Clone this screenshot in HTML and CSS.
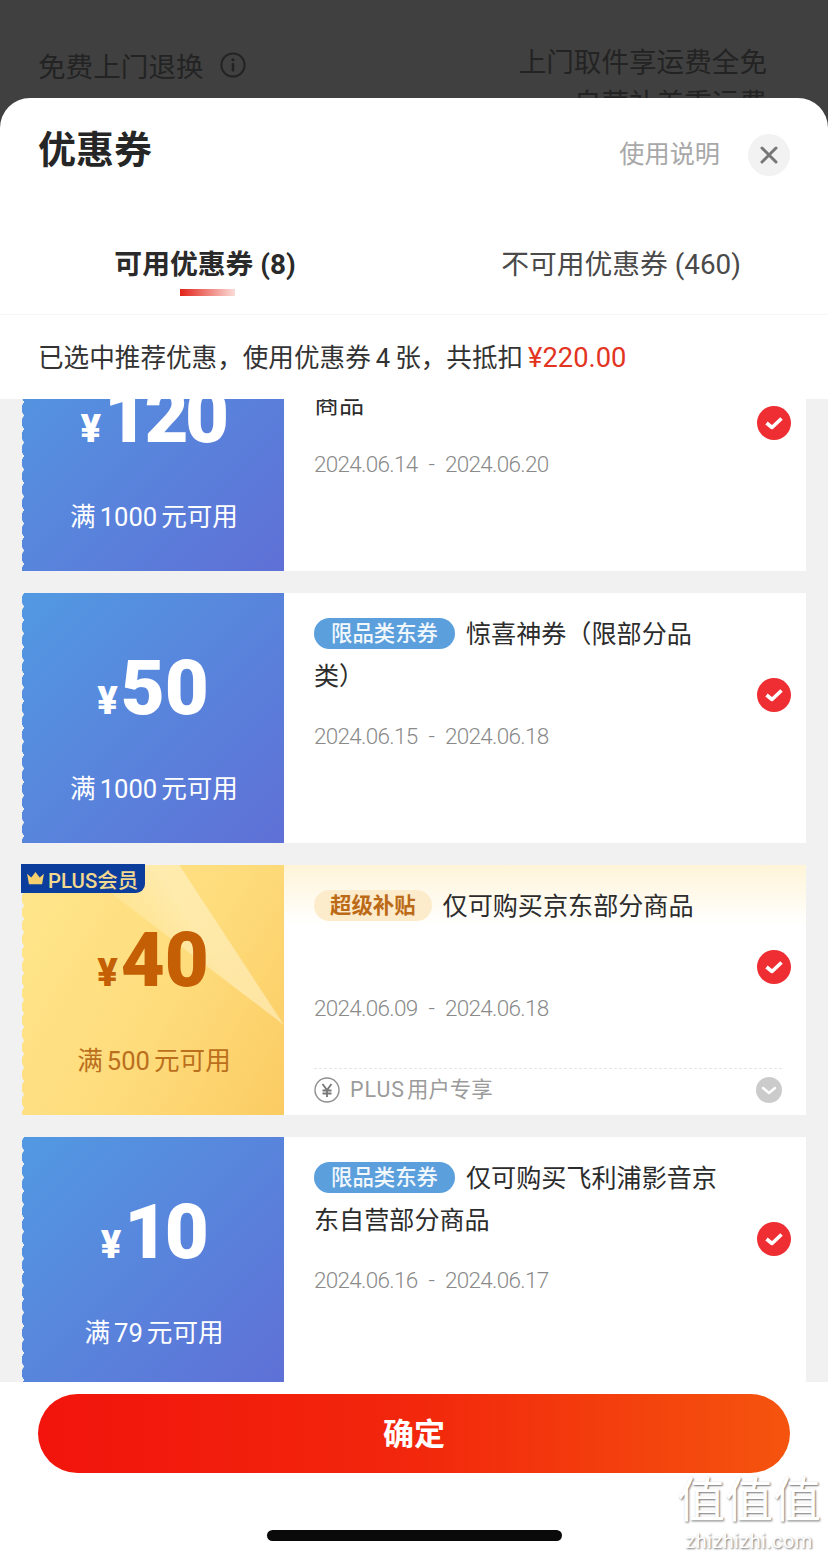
FILE: index.html
```html
<!DOCTYPE html>
<html lang="zh-CN">
<head>
  <meta charset="UTF-8">
  <meta name="viewport" content="width=device-width, initial-scale=1.0">
  <title>优惠券</title>
  <link rel="stylesheet" href="styles.css">
</head>
<body>

<div class="backdrop">
  <div class="backdrop-left">
    <span>免费上门退换</span>
    <svg class="info-icon" viewBox="0 0 26 26" width="26" height="26">
      <circle cx="13" cy="13" r="11.6" fill="none" stroke="#232323" stroke-width="2"/>
      <circle cx="13" cy="7.8" r="1.6" fill="#232323"/>
      <rect x="11.7" y="11" width="2.6" height="8.4" rx="1" fill="#232323"/>
    </svg>
  </div>
  <div class="backdrop-right">上门取件享运费全免<br>自营补差重运费</div>
</div>

<div class="sheet">
  <div class="sheet-head">
    <h1 class="sheet-title">优惠券</h1>
    <div class="sheet-actions">
      <span class="help-link">使用说明</span>
      <span class="close-btn">
        <svg viewBox="0 0 20 20" width="20" height="20">
          <path d="M3 3 L17 17 M17 3 L3 17" stroke="#777" stroke-width="3" stroke-linecap="round"/>
        </svg>
      </span>
    </div>
  </div>

  <div class="tabs">
    <div class="tab active">
      <span>可用优惠券 (8)</span>
      <i class="tab-line"></i>
    </div>
    <div class="tab">
      <span>不可用优惠券 (460)</span>
    </div>
  </div>

  <div class="notice"><span>已选中推荐优惠，使用优惠券</span><span class="num">4</span><span>张，共抵扣</span><span class="price">¥220.00</span></div>

  <div class="coupon-list">
    <div class="coupons">

      <!-- first line of this title is scrolled out of view -->
      <div class="coupon">
        <div class="coupon-left blue">
          <div class="amount"><span class="yen">¥</span><span class="value tight">120</span></div>
          <div class="cond">满<span class="num">1000</span>元可用</div>
        </div>
        <div class="coupon-right">
          <div class="coupon-body">
            <div class="coupon-text">
              <div class="coupon-title"><br>商品</div>
              <div class="coupon-date">2024.06.14 - 2024.06.20</div>
            </div>
            <svg class="check" viewBox="0 0 34 34" width="34" height="34"><circle cx="17" cy="17" r="17" fill="#ee2e32"/><path d="M9.5 17 L15 21.5 L24.5 12.5" fill="none" stroke="#fff" stroke-width="3.6" stroke-linejoin="round"/></svg>
          </div>
        </div>
      </div>

      <div class="coupon">
        <div class="coupon-left blue">
          <div class="amount"><span class="yen">¥</span><span class="value">50</span></div>
          <div class="cond">满<span class="num">1000</span>元可用</div>
        </div>
        <div class="coupon-right">
          <div class="coupon-body">
            <div class="coupon-text">
              <div class="coupon-title"><span class="badge badge-blue">限品类东券</span>惊喜神券（限部分品<br>类）</div>
              <div class="coupon-date">2024.06.15 - 2024.06.18</div>
            </div>
            <svg class="check" viewBox="0 0 34 34" width="34" height="34"><circle cx="17" cy="17" r="17" fill="#ee2e32"/><path d="M9.5 17 L15 21.5 L24.5 12.5" fill="none" stroke="#fff" stroke-width="3.6" stroke-linejoin="round"/></svg>
          </div>
        </div>
      </div>

      <div class="coupon">
        <div class="coupon-left gold">
          <div class="plus-tag">
            <svg viewBox="0 0 20 16" width="19" height="15"><path d="M1 3 L5.5 7 L10 1 L14.5 7 L19 3 L17 14 H3 Z" fill="#f6cf6e"/></svg>
            <span>PLUS会员</span>
          </div>
          <div class="amount"><span class="yen">¥</span><span class="value">40</span></div>
          <div class="cond">满<span class="num">500</span>元可用</div>
        </div>
        <div class="coupon-right gold-top">
          <div class="coupon-body">
            <div class="coupon-text">
              <div class="coupon-title"><span class="badge badge-gold">超级补贴</span>仅可购买京东部分商品</div>
              <div class="coupon-date">2024.06.09 - 2024.06.18</div>
            </div>
            <svg class="check" viewBox="0 0 34 34" width="34" height="34"><circle cx="17" cy="17" r="17" fill="#ee2e32"/><path d="M9.5 17 L15 21.5 L24.5 12.5" fill="none" stroke="#fff" stroke-width="3.6" stroke-linejoin="round"/></svg>
          </div>
          <div class="coupon-foot">
            <svg viewBox="0 0 26 26" width="26" height="26">
              <circle cx="13" cy="13" r="12" fill="none" stroke="#8f8f8f" stroke-width="1.4"/>
              <path d="M8.5 7 L13 13 L17.5 7 M13 13 V20 M8.5 13.5 H17.5 M8.5 16.5 H17.5" fill="none" stroke="#777" stroke-width="1.8"/>
            </svg>
            <span class="foot-text"><span class="foot-plus">PLUS</span>用户专享</span>
            <svg class="foot-arrow" viewBox="0 0 26 26" width="26" height="26">
              <circle cx="13" cy="13" r="13" fill="#cbcbcb"/>
              <path d="M7 11 L13 16 L19 11" fill="none" stroke="#fff" stroke-width="2.4" stroke-linecap="round" stroke-linejoin="round"/>
            </svg>
          </div>
        </div>
      </div>

      <div class="coupon">
        <div class="coupon-left blue">
          <div class="amount"><span class="yen">¥</span><span class="value tight">10</span></div>
          <div class="cond">满<span class="num">79</span>元可用</div>
        </div>
        <div class="coupon-right">
          <div class="coupon-body">
            <div class="coupon-text">
              <div class="coupon-title"><span class="badge badge-blue">限品类东券</span>仅可购买飞利浦影音京<br>东自营部分商品</div>
              <div class="coupon-date">2024.06.16 - 2024.06.17</div>
            </div>
            <svg class="check" viewBox="0 0 34 34" width="34" height="34"><circle cx="17" cy="17" r="17" fill="#ee2e32"/><path d="M9.5 17 L15 21.5 L24.5 12.5" fill="none" stroke="#fff" stroke-width="3.6" stroke-linejoin="round"/></svg>
          </div>
        </div>
      </div>

    </div>
  </div>

  <div class="sheet-foot">
    <button class="confirm-btn">确定</button>
    <div class="home-bar"></div>
  </div>
</div>

<div class="watermark">
  <div class="wm-big">值值值</div>
  <div class="wm-small">zhizhizhi.com</div>
</div>

</body>
</html>
```

FILE: styles.css
```css
* {
  box-sizing: border-box;
}

body {
  margin: 0;
  width: 828px;
  height: 1558px;
  overflow: hidden;
  position: relative;
  background-color: #404040;
  font-family: Roboto, "Noto Sans CJK SC", sans-serif;
  color: #2a2a2a;
}

/* Page dimmed behind the sheet */
.backdrop {
  height: 98px;
  overflow: hidden;
  display: flex;
  justify-content: space-between;
  padding: 42px 61px 0 38px;
  font-size: 27.6px;
  color: #232323;
}

.backdrop-left {
  display: flex;
  align-items: center;
  gap: 16px;
  height: 46px;
}

.backdrop-right {
  text-align: right;
  line-height: 41px;
}

/* Bottom sheet */
.sheet {
  height: 1460px;
  display: flex;
  flex-direction: column;
  background-color: #fff;
  border-radius: 30px 30px 0 0;
  overflow: hidden;
}

.sheet-head {
  display: flex;
  justify-content: space-between;
  padding: 26px 38px 0 38px;
}

.sheet-title {
  margin: 0;
  font-size: 38px;
  line-height: 52px;
  font-weight: 700;
  color: #262626;
}

.sheet-actions {
  display: flex;
  align-items: center;
  gap: 28px;
  height: 42px;
  margin-top: 10px;
}

.help-link {
  font-size: 25.2px;
  line-height: 38px;
  color: #a8a8a8;
}

.close-btn {
  width: 42px;
  height: 42px;
  border-radius: 50%;
  background-color: #f2f2f2;
  display: flex;
  justify-content: center;
  align-items: center;
}

/* Tabs */
.tabs {
  display: grid;
  grid-template-columns: 1fr 1fr;
  height: 139px;
  padding-top: 69px;
  border-bottom: 1px solid #f6f6f6;
}

.tab {
  display: flex;
  flex-direction: column;
  align-items: center;
  font-size: 27.8px;
  line-height: 40px;
  color: #4a4a4a;
}

.tab.active {
  font-weight: 700;
  color: #2a2a2a;
  padding-right: 4px;
}

.tab-line {
  width: 55px;
  height: 7px;
  margin-top: 4px;
  margin-left: 4px;
  background: linear-gradient(90deg, #e2231a, #fbdcd8);
}

/* Summary line */
.notice {
  height: 84px;
  flex-shrink: 0;
  display: flex;
  align-items: baseline;
  padding: 5px 38px 0;
  font-size: 25.6px;
  line-height: 76px;
  color: #333;
}

.notice .num {
  margin: 0 5px;
}

.price {
  margin-left: 5px;
  color: #e2341f;
  font-size: 27.3px;
}

/* Coupon list */
.coupon-list {
  flex: 1;
  min-height: 0;
  overflow: hidden;
  background-color: #f1f1f2;
}

.coupons {
  display: flex;
  flex-direction: column;
  gap: 22px;
  margin-top: -78px;
  padding: 0 22px;
}

.coupon {
  display: flex;
  height: 250px;
  flex-shrink: 0;
}

.coupon-left {
  position: relative;
  width: 262px;
  flex-shrink: 0;
  padding-top: 54px;
  display: flex;
  flex-direction: column;
  align-items: center;
}

/* stub fill, masked so the left edge is scalloped */
.coupon-left::before {
  content: "";
  position: absolute;
  left: 0;
  top: 0;
  right: 0;
  bottom: 0;
  -webkit-mask:
    linear-gradient(#000, #000) right top / calc(100% - 4px) 100% no-repeat,
    radial-gradient(ellipse 4.4px 7.4px at 100% 50%, #000 94%, transparent 100%) left top / 4px 13.5px repeat-y;
  mask:
    linear-gradient(#000, #000) right top / calc(100% - 4px) 100% no-repeat,
    radial-gradient(ellipse 4.4px 7.4px at 100% 50%, #000 94%, transparent 100%) left top / 4px 13.5px repeat-y;
}

.blue {
  color: #fff;
}

.blue::before {
  background: linear-gradient(135deg, #5299e2, #5f70d6);
}

.gold {
  color: #bb6f1d;
}

.gold::before {
  background: linear-gradient(120deg, #ffe68c 0%, #fedc7c 55%, #fbcb62 100%);
}

/* lighter wedge across the gold stub, ends in a point on the right edge */
.gold::after {
  content: "";
  position: absolute;
  left: 0;
  top: 0;
  width: 100%;
  height: 160px;
  background: linear-gradient(236deg, rgba(255, 247, 215, 0.5) 35%, rgba(255, 240, 170, 0) 62%);
  clip-path: polygon(20% 0, 60% 0, 100% 100%);
}

.amount {
  position: relative;
  z-index: 1;
  display: flex;
  align-items: baseline;
  height: 82px;
  line-height: 82px;
  font-weight: 900;
}

.yen {
  font-size: 38px;
  margin-right: 3px;
}

.value {
  font-size: 76px;
}

.value.tight {
  letter-spacing: -3.5px;
}

.gold .amount {
  color: #c45f05;
}

.cond {
  position: relative;
  z-index: 1;
  margin-top: 42px;
  padding-left: 2px;
  font-size: 25.6px;
  line-height: 36px;
  white-space: nowrap;
}

.cond .num {
  margin: 0 4px;
}

.plus-tag {
  position: absolute;
  left: -1px;
  top: -1px;
  z-index: 3;
  width: 124px;
  height: 29px;
  display: flex;
  align-items: center;
  gap: 3px;
  padding-left: 5px;
  background-color: #0b3e9c;
  border-radius: 0 0 9px 0;
  color: #f3d88f;
  font-size: 20.4px;
  font-weight: 500;
}

.coupon-right {
  flex: 1;
  display: flex;
  flex-direction: column;
  background-color: #fff;
}

.gold-top {
  background: linear-gradient(180deg, #fff4d8 0, #fff 60px);
}

.coupon-body {
  display: flex;
  align-items: center;
  justify-content: space-between;
  height: 203px;
  padding: 0 15px 0 30px;
}

.coupon-text {
  align-self: flex-start;
  padding-top: 21px;
}

.coupon-title {
  height: 84px;
  font-size: 25.1px;
  line-height: 42px;
  color: #2c2c2c;
  white-space: nowrap;
}

.badge {
  display: inline-block;
  height: 31px;
  line-height: 31px;
  padding: 0 17px;
  margin-right: 11px;
  border-radius: 16px;
  font-size: 21.4px;
  font-weight: 500;
  vertical-align: 2px;
}

.badge-blue {
  background-color: #5b9fdc;
  color: #f2f7fc;
}

.badge-gold {
  background-color: #fdeccb;
  color: #bb6a17;
  font-weight: 700;
  padding: 0 16px;
}

.coupon-date {
  margin-top: 18px;
  font-size: 22.5px;
  line-height: 40px;
  font-weight: 300;
  letter-spacing: -0.7px;
  word-spacing: 6px;
  color: #8a8a8a;
}

.coupon-foot {
  display: flex;
  align-items: flex-start;
  height: 47px;
  margin: 0 24px 0 30px;
  border-top: 1px dashed #e6e6e6;
  padding-top: 8px;
}

.foot-text {
  margin-left: 10px;
  font-size: 21.4px;
  line-height: 26px;
  color: #9b9b9b;
}

.foot-plus {
  margin-right: 2px;
  letter-spacing: 1px;
}

.foot-arrow {
  margin-left: auto;
}

/* Bottom button */
.sheet-foot {
  height: 176px;
  flex-shrink: 0;
  display: flex;
  flex-direction: column;
  align-items: center;
  padding-top: 12px;
  background-color: #fff;
}

.confirm-btn {
  width: 752px;
  height: 79px;
  padding: 0 0 5px;
  border: none;
  border-radius: 40px;
  background: linear-gradient(90deg, #f2140c, #f2270c 50%, #f5540e);
  color: #fff;
  font-family: inherit;
  font-size: 31px;
  font-weight: 700;
}

.home-bar {
  width: 295px;
  height: 11px;
  margin-top: 57px;
  border-radius: 6px;
  background-color: #0a0a0a;
}

/* Site watermark over the corner */
.watermark {
  position: absolute;
  left: 676px;
  top: 1473px;
  width: 146px;
  text-align: center;
  color: #fff;
  text-shadow: 1px 1px 2px rgba(0, 0, 0, 0.55);
}

.wm-big {
  font-size: 48px;
  line-height: 56px;
  white-space: nowrap;
}

.wm-small {
  font-size: 20px;
  line-height: 24px;
  letter-spacing: 0.4px;
}
```
